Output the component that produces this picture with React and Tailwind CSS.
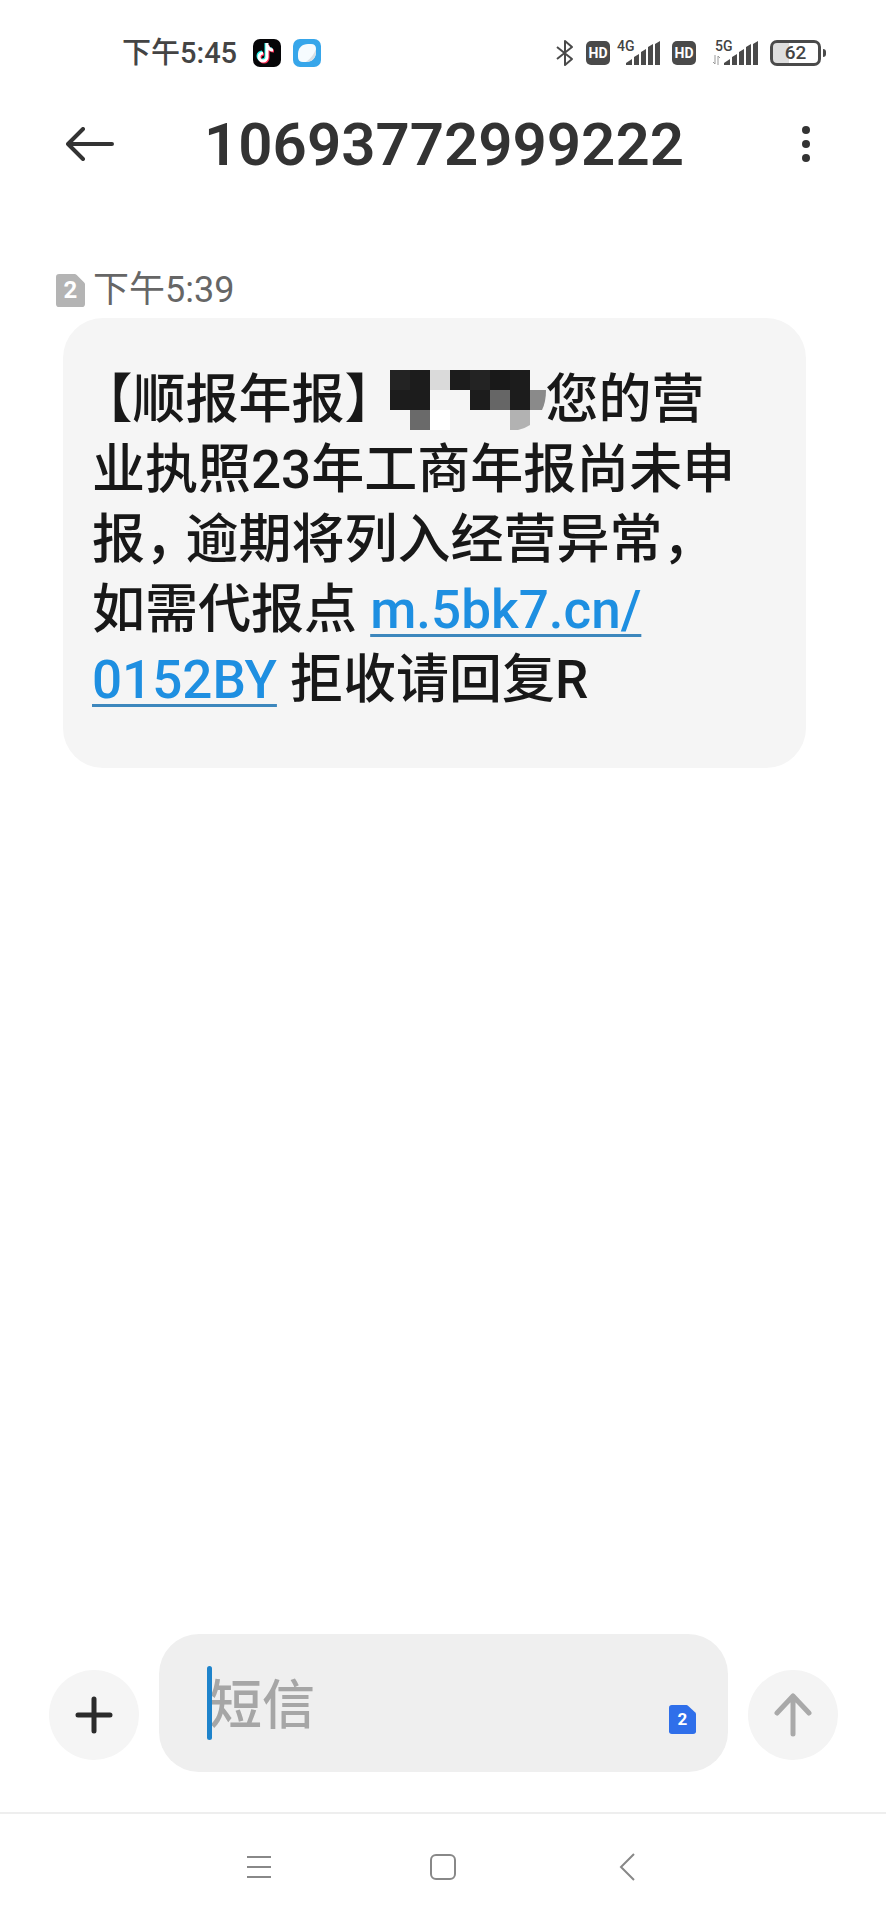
const DARK = '#1c1c1c'

// [column, row, colour] of every tile that hides the recipient's name
const TILES = [
  [0, 0, '#232323'], [1, 0, DARK], [2, 0, '#dadada'], [3, 0, DARK], [4, 0, '#232323'], [5, 0, '#191919'], [6, 0, DARK],
  [0, 1, DARK], [1, 1, DARK], [4, 1, DARK], [5, 1, '#666666'], [6, 1, DARK],
  [1, 2, '#6a6a6a'], [2, 2, '#ffffff'],
]

function Mosaic() {
  return (
    <svg className="inline-block align-middle -ml-2 -mt-1 mb-1" width="156" height="60" viewBox="0 0 156 60" aria-hidden="true">
      {TILES.map(([x, y, fill]) => (
        <rect key={`${x}-${y}`} x={x * 20} y={y * 20} width="20" height="20" fill={fill} />
      ))}
      <path d="M140 20h16q0 12-4 20h-12z" fill="#8a8a8a" />
      <path d="M120 40h20v15q-6 4-12 5h-8z" fill="#b2b2b2" />
    </svg>
  )
}

function SimBadge({ className, label }) {
  return (
    <span className={`relative inline-flex items-center justify-center font-bold text-white ${className}`}>
      <svg className="absolute inset-0 h-full w-full" viewBox="0 0 28 32" preserveAspectRatio="none" aria-hidden="true">
        <path d="M3 0h15q1 0 2 1l7 7q1 1 1 2v19q0 3-3 3H3q-3 0-3-3V3q0-3 3-3z" fill="currentColor" className="text-[var(--sim)]" />
      </svg>
      <span className="relative">{label}</span>
    </span>
  )
}

function HdBadge() {
  return (
    <span className="flex h-6 w-6 items-center justify-center rounded-[5px] bg-[#4a4a4a] text-[14px] font-bold text-white">HD</span>
  )
}

function Signal({ label, arrows }) {
  return (
    <span className="relative flex h-7 w-[46px] items-end justify-end pb-[2px]">
      <span className="absolute left-[3px] top-0 text-[14px] leading-[14px] font-medium">{label}</span>
      {arrows && (
        <svg className="absolute bottom-[2px] left-0" width="9" height="10" viewBox="0 0 9 10" fill="none" stroke="#999" aria-hidden="true">
          <path d="M3 0v9L1 7M6 10V1l2 2" />
        </svg>
      )}
      <svg width="34" height="24" viewBox="0 0 34 24" fill="#4a4a4a" aria-hidden="true">
        <path d="M0 24v-2l6-4v6zM8 16l5-3v11H8zM15 11l5-3v16h-5zM22 6l5-3v21h-5zM29 3l5-3v24h-5z" />
      </svg>
    </span>
  )
}

function StatusBar() {
  return (
    <div className="flex h-[106px] items-center justify-between pl-[122px] pr-[60px] text-[#444]">
      <div className="flex items-center">
        <span className="text-[29px] leading-8 font-medium">下午5:45</span>
        <svg className="ml-4" width="28" height="28" viewBox="0 0 28 28" fill="none" aria-hidden="true">
          <rect width="28" height="28" rx="7" fill="#060608" />
          <g strokeWidth="3">
            <path d="M14 5v13a4 4 0 1 1-4-4M14 6c1 3 3 5 6 5" stroke="#25f4ee" transform="translate(-1 -1)" />
            <path d="M14 5v13a4 4 0 1 1-4-4M14 6c1 3 3 5 6 5" stroke="#fe2c55" transform="translate(1 1)" />
            <path d="M14 4v14a4 4 0 1 1-4-4M14 6c1 3 3 5 6 5" stroke="#fff" />
          </g>
        </svg>
        <svg className="ml-3" width="28" height="28" viewBox="0 0 28 28" aria-hidden="true">
          <rect width="28" height="28" rx="7" fill="#37a6ea" />
          <path d="M5 15c0-6 4-10 10-10h3q5 0 5 5v3c0 6-4 10-10 10h-3q-5 0-5-5z" fill="#f6fbfe" />
          <path d="M23 10v3c0 6-4 10-10 10q7-5 10-13z" fill="#d8dfe4" />
        </svg>
      </div>
      <div className="flex items-center">
        <svg width="18" height="28" viewBox="0 0 18 28" fill="none" stroke="#4a4a4a" strokeWidth="2" strokeLinejoin="round" aria-hidden="true">
          <path d="M1 8l15 12-7 6V2l7 6L1 20" />
        </svg>
        <span className="ml-3"><HdBadge /></span>
        <span className="ml-1"><Signal label="4G" /></span>
        <span className="ml-3"><HdBadge /></span>
        <span className="ml-4"><Signal label="5G" arrows /></span>
        <span className="ml-3 flex h-[26px] w-[51px] items-center justify-center rounded-[7px] border-3 border-[#4a4a4a] bg-linear-to-r from-[#dedede] from-35% to-white to-35% text-[19px] leading-5 font-medium">62</span>
        <span className="ml-[2px] h-2 w-[3px] rounded-r-sm bg-[#4a4a4a]" />
      </div>
    </div>
  )
}

export default function App() {
  return (
    <div className="flex min-h-screen flex-col bg-white font-['Roboto','Noto_Sans_CJK_SC',sans-serif]" lang="zh-CN">
      <StatusBar />

      <header className="flex h-[76px] items-center justify-between pl-[66px] pr-12 text-[#333]">
        <button type="button" aria-label="返回">
          <svg width="48" height="34" viewBox="0 0 48 34" fill="none" stroke="currentColor" strokeWidth="4" strokeLinecap="round" strokeLinejoin="round">
            <path d="M17 2L2 17l15 15M2 17h44" />
          </svg>
        </button>
        <h1 className="pt-[2px] text-[60px] leading-[76px] font-semibold">10693772999222</h1>
        <button type="button" aria-label="更多" className="flex w-16 justify-center">
          <svg width="10" height="38" viewBox="0 0 10 38" fill="currentColor">
            <circle cx="5" cy="5" r="4" />
            <circle cx="5" cy="19" r="4" />
            <circle cx="5" cy="33" r="4" />
          </svg>
        </button>
      </header>

      <main className="flex-1 pt-[86px]">
        <div className="flex items-center gap-2 pl-14 text-[36px] leading-[44px] text-[#666]">
          <SimBadge label="2" className="h-[33px] w-[29px] text-[24px] leading-8 [--sim:#b4b4b4]" />
          <time>下午5:39</time>
        </div>
        <div className="mt-[6px] ml-[63px] mr-20 rounded-[40px] bg-[#f5f5f5] pt-[47px] pb-[53px] pl-[29px] pr-[60px]">
          <p className="text-[53px] leading-[70px] font-medium text-[#181818]">
            <span className="ml-[14px] [font-feature-settings:'halt']">【</span>顺报年报】<Mosaic />您的营业执照23年工商年报尚未申报<span className="mr-[14px] [font-feature-settings:'halt']">，</span>逾期将列入经营异常，如需代报点{' '}
            <a href="#" className="text-[#1e8fe1] underline decoration-[#3d87bd] decoration-3 underline-offset-6">m.5bk7.cn/<wbr />0152BY</a>
            {' '}拒收请回复R
          </p>
        </div>
      </main>

      <form className="flex items-end gap-5 pl-[49px] pr-12 pb-10" onSubmit={(e) => e.preventDefault()}>
        <button type="button" aria-label="添加" className="mb-3 flex h-[90px] w-[90px] shrink-0 items-center justify-center rounded-full bg-[#f5f5f5]">
          <svg width="40" height="40" viewBox="0 0 40 40" stroke="#2b2b2b" strokeWidth="5" strokeLinecap="round">
            <path d="M20 4v32M4 20h32" />
          </svg>
        </button>
        <div className="relative flex h-[138px] min-w-0 flex-1 items-center rounded-[40px] bg-[#efefef] pl-[50px] pr-8">
          <input
            type="text"
            aria-label="短信"
            placeholder="短信"
            className="mt-2 h-[76px] min-w-0 flex-1 text-[53px] font-medium outline-none placeholder:text-[#a6a6a6]"
          />
          <span className="absolute left-12 top-8 h-[74px] w-[5px] rounded-full bg-[#1e83cb]" />
          <SimBadge label="2" className="mt-8 h-[29px] w-[27px] text-[17px] leading-5 [--sim:#2f6fea]" />
        </div>
        <button type="submit" aria-label="发送" className="mb-3 flex h-[90px] w-[90px] shrink-0 items-center justify-center rounded-full bg-[#f4f4f4]">
          <svg width="40" height="44" viewBox="0 0 40 44" fill="none" stroke="#a9a9a9" strokeWidth="5" strokeLinecap="round" strokeLinejoin="round">
            <path d="M20 41V3M4 20L20 3l16 17" />
          </svg>
        </button>
      </form>

      <nav className="flex h-[108px] items-center justify-center gap-[120px] border-t-2 border-[#eeeeee] text-[#888]">
        <button type="button" aria-label="最近任务" className="flex w-16 justify-center">
          <svg width="24" height="24" viewBox="0 0 24 24" stroke="currentColor" strokeWidth="2">
            <path d="M0 2h24M0 12h24M0 22h24" />
          </svg>
        </button>
        <button type="button" aria-label="主屏幕" className="flex w-16 justify-center">
          <svg width="26" height="28" viewBox="0 0 26 28" fill="none" stroke="currentColor" strokeWidth="2">
            <rect x="1" y="2" width="24" height="24" rx="5" />
          </svg>
        </button>
        <button type="button" aria-label="后退" className="flex w-16 justify-center">
          <svg width="16" height="28" viewBox="0 0 16 28" fill="none" stroke="currentColor" strokeWidth="2">
            <path d="M15 1L2 14l13 13" />
          </svg>
        </button>
      </nav>
    </div>
  )
}
